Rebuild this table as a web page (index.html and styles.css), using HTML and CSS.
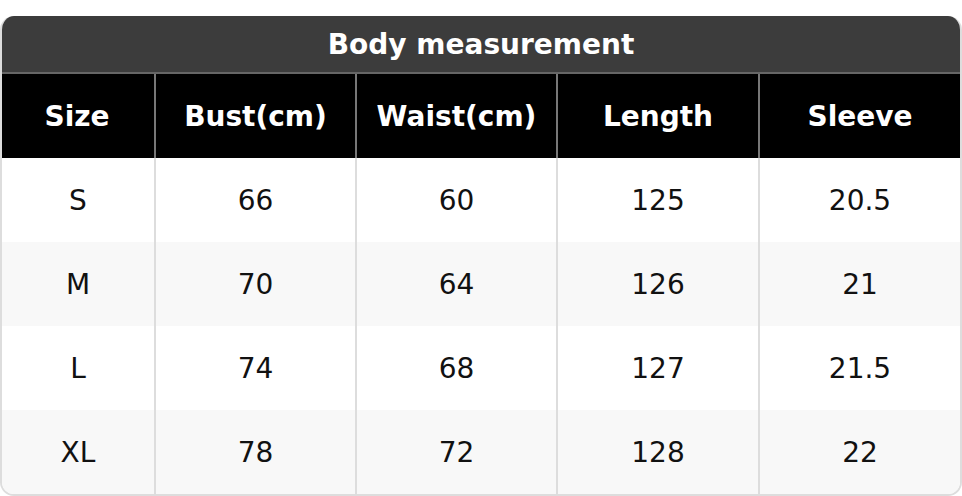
FILE: index.html
```html
<!DOCTYPE html>
<html>
<head>
<meta charset="utf-8">
<link rel="stylesheet" href="styles.css">
</head>
<body>
<div class="card">
  <div class="title">Body measurement</div>
  <div class="row head">
    <div class="cell">Size</div>
    <div class="cell">Bust(cm)</div>
    <div class="cell">Waist(cm)</div>
    <div class="cell">Length</div>
    <div class="cell">Sleeve</div>
  </div>
  <div class="row">
    <div class="cell">S</div><div class="cell">66</div><div class="cell">60</div><div class="cell">125</div><div class="cell">20.5</div>
  </div>
  <div class="row alt">
    <div class="cell">M</div><div class="cell">70</div><div class="cell">64</div><div class="cell">126</div><div class="cell">21</div>
  </div>
  <div class="row">
    <div class="cell">L</div><div class="cell">74</div><div class="cell">68</div><div class="cell">127</div><div class="cell">21.5</div>
  </div>
  <div class="row alt">
    <div class="cell">XL</div><div class="cell">78</div><div class="cell">72</div><div class="cell">128</div><div class="cell">22</div>
  </div>
</div>
</body>
</html>
```
FILE: styles.css
```css
html, body {
  margin: 0;
  padding: 0;
  background: #ffffff;
}
body {
  padding-top: 16px;
  font-family: "DejaVu Sans", Verdana, sans-serif;
}
.card {
  width: 962px;
  box-sizing: border-box;
  border: 2px solid #dddddd;
  border-top: none;
  border-radius: 14px;
  overflow: hidden;
}
.title {
  height: 56px;
  background: #3c3c3c;
  color: #ffffff;
  font-weight: bold;
  font-size: 28px;
  display: flex;
  align-items: center;
  justify-content: center;
  margin: 0 -2px;
  border-bottom: 2px solid #666666;
}
.row {
  display: grid;
  grid-template-columns: 154px 201px 201px 202px 1fr;
  height: 84px;
  background: #ffffff;
}
.row.alt {
  background: #f8f8f8;
}
.cell {
  display: flex;
  align-items: center;
  justify-content: center;
  font-size: 28px;
  color: #111111;
  border-right: 2px solid #dddddd;
}
.cell:last-child {
  border-right: none;
}
.head {
  background: #000000;
  margin: 0 -2px;
  height: 84px;
  grid-template-columns: 156px 201px 201px 202px 1fr;
}
.head .cell {
  color: #ffffff;
  font-weight: bold;
  border-right: 2px solid #777777;
}
.head .cell:last-child {
  border-right: 2px solid #777777;
}
```
